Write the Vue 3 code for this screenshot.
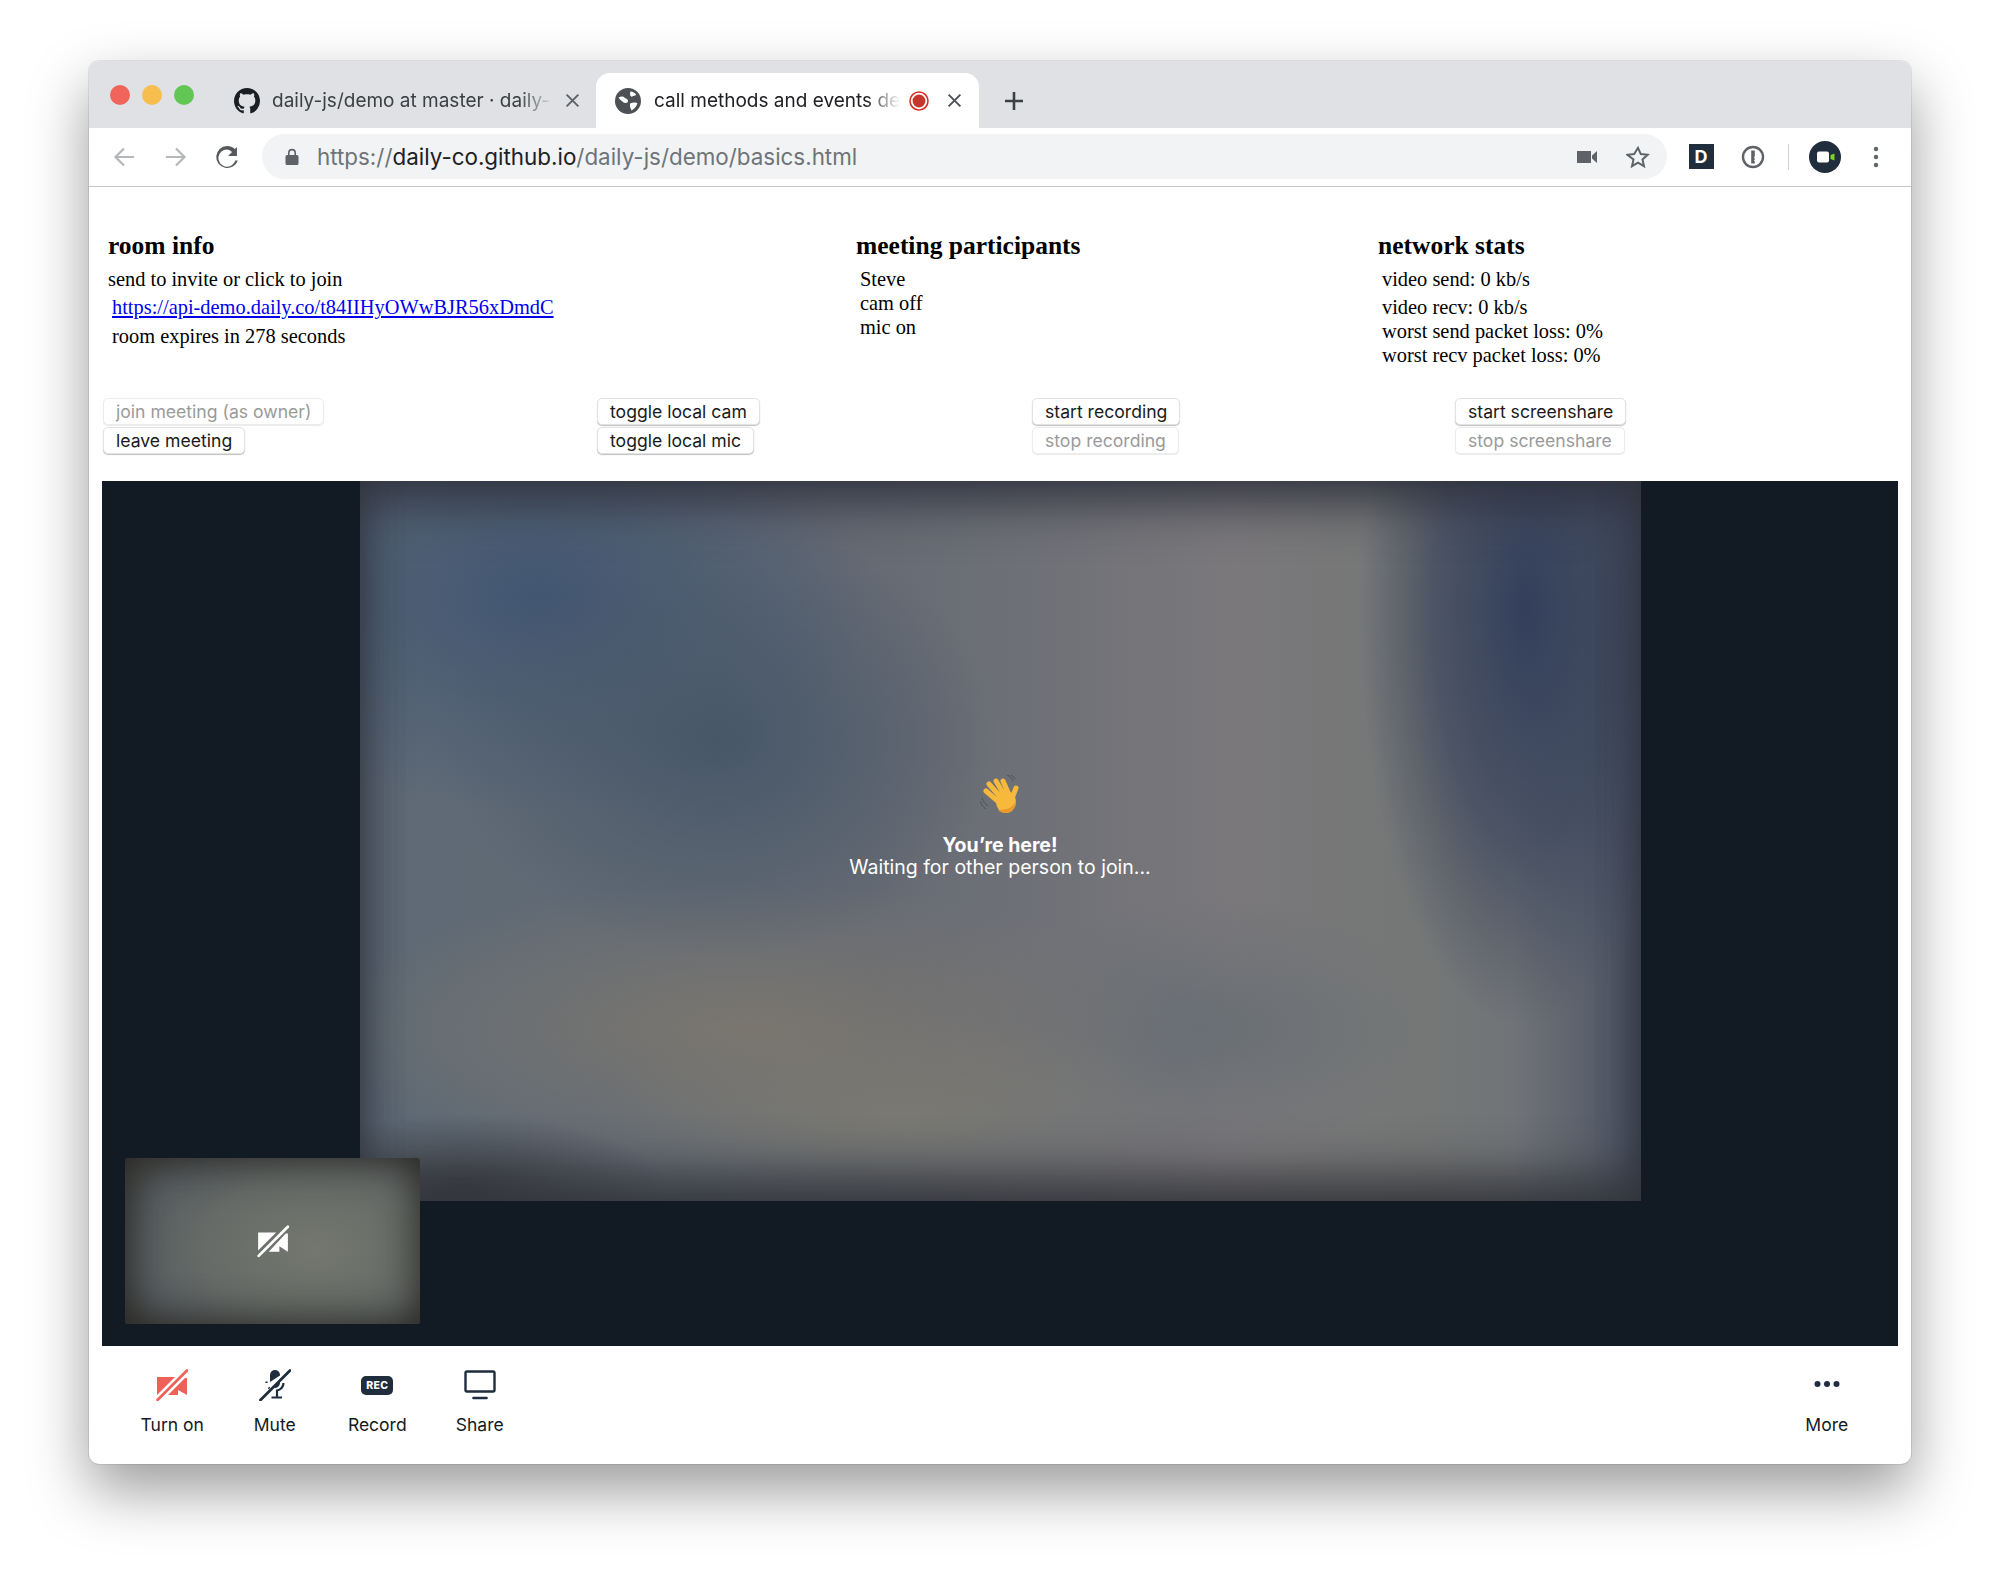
<script setup>
const leftTools = [
  { label: 'Turn on', icon: 'cam' },
  { label: 'Mute', icon: 'mic' },
  { label: 'Record', icon: 'rec' },
  { label: 'Share', icon: 'screen' }
]
</script>

<template>
  <div class="page">
    <div class="window">
      <div class="tabbar">
        <div class="lights">
          <span class="light red"></span>
          <span class="light yellow"></span>
          <span class="light green"></span>
        </div>
        <div class="tab">
          <svg class="favicon" viewBox="0 0 16 16"><path fill="#1b1f23" d="M8 0C3.58 0 0 3.58 0 8c0 3.54 2.29 6.53 5.47 7.59.4.07.55-.17.55-.38 0-.19-.01-.82-.01-1.49-2.01.37-2.53-.49-2.69-.94-.09-.23-.48-.94-.82-1.13-.28-.15-.68-.52-.01-.53.63-.01 1.08.58 1.23.82.72 1.21 1.87.87 2.33.66.07-.52.28-.87.51-1.07-1.78-.2-3.64-.89-3.64-3.95 0-.87.31-1.59.82-2.15-.08-.2-.36-1.02.08-2.12 0 0 .67-.21 2.2.82.64-.18 1.32-.27 2-.27.68 0 1.36.09 2 .27 1.53-1.04 2.2-.82 2.2-.82.44 1.1.16 1.92.08 2.12.51.56.82 1.27.82 2.15 0 3.07-1.87 3.75-3.65 3.95.29.25.54.73.54 1.48 0 1.07-.01 1.93-.01 2.2 0 .21.15.46.55.38A8.013 8.013 0 0016 8c0-4.42-3.58-8-8-8z"/></svg>
          <span class="tab-title first">daily-js/demo at master · daily-</span>
          <svg class="tab-x" viewBox="0 0 14 14"><path d="M1.500 1.500l11 11M12.500 1.500l-11 11" stroke="#5f6368" stroke-width="1.800" fill="none"/></svg>
        </div>
        <div class="tab active">
          <svg class="favicon" viewBox="0 0 22 22">
            <circle cx="11" cy="11" r="11" fill="#4d5156"/>
            <path fill="#fff" d="M3 8c2-1 4-1 5 0s3 1 3 3-3 2-4 1-3-2-4-4zM13 3c2 0 4 1 5 3l-3 1c-1 1-3 0-2-4zM13 13c2-1 5-1 6 0-1 3-3 5-5 6-1-2-2-4-1-6z"/>
          </svg>
          <span class="tab-title second">call methods and events de</span>
          <svg class="rec-dot" viewBox="0 0 20 20"><circle cx="10" cy="10" r="9" fill="#fff" stroke="#d93025" stroke-width="1.600"/><circle cx="10" cy="10" r="6.400" fill="#c5372c"/></svg>
          <svg class="tab-x" viewBox="0 0 14 14"><path d="M1.500 1.500l11 11M12.500 1.500l-11 11" stroke="#4d5156" stroke-width="1.800" fill="none"/></svg>
        </div>
        <svg class="plus" viewBox="0 0 20 20"><path d="M10 1v18M1 10h18" stroke="#3c4043" stroke-width="2.600" fill="none"/></svg>
      </div>

      <div class="toolbar">
        <svg class="nav back" viewBox="0 0 24 24"><path d="M22 12H4M12 3.500L3.500 12l8.500 8.500" stroke="#b5b7ba" stroke-width="2.200" fill="none"/></svg>
        <svg class="nav forward" viewBox="0 0 24 24"><path d="M2 12h18M12 3.500l8.500 8.500-8.500 8.500" stroke="#b5b7ba" stroke-width="2.200" fill="none"/></svg>
        <svg class="nav reload" viewBox="0 0 24 24"><path fill="#55585c" d="M20.500 3.500v7.600h-7.600l3.400-3.400A7.400 7.400 0 0 0 12 5.600 7.400 7.400 0 1 0 19.100 15h2.200A9.500 9.500 0 1 1 12 2.500c2.600 0 5 1 6.800 2.700z"/></svg>
        <div class="omnibox">
          <svg class="lock" viewBox="0 0 14 18"><path fill="#5f6368" d="M2 7h10a1.500 1.500 0 0 1 1.500 1.500v7A1.500 1.500 0 0 1 12 17H2a1.500 1.500 0 0 1-1.500-1.500v-7A1.500 1.500 0 0 1 2 7z"/><path d="M3.800 7V4.800a3.200 3.200 0 0 1 6.400 0V7" stroke="#5f6368" stroke-width="1.600" fill="none"/></svg>
          <span class="url"><span class="dim">https://</span>daily-co.github.io<span class="dim">/daily-js/demo/basics.html</span></span>
          <svg class="omni-cam" viewBox="0 0 20 14"><path fill="#5f6368" d="M0 1h14v12H0zM15 5.500L20 1v12l-5-4.500z"/></svg>
          <svg class="omni-star" viewBox="0 0 24 24"><path d="M12 2.800l2.800 6.300 6.900.7-5.200 4.600 1.500 6.800-6-3.500-6 3.500 1.500-6.800L1.300 9.800l6.900-.7z" fill="none" stroke="#5f6368" stroke-width="2"/></svg>
        </div>
        <div class="ext-d">D</div>
        <svg class="ext-key" viewBox="0 0 24 24"><circle cx="12" cy="12" r="10" fill="none" stroke="#5f6368" stroke-width="2.400"/><path d="M10.200 5.500h3.600v6l-1 1 1 1v1l-1 .8 1 .9v2.300h-3.600z" fill="#5f6368"/></svg>
        <span class="ext-divider"></span>
        <svg class="ext-avatar" viewBox="0 0 32 32"><circle cx="16" cy="16" r="16" fill="#1f2d3d"/><rect x="8" y="10.500" width="12" height="11" rx="2" fill="#fff"/><path d="M21.500 14l4-1.500v7l-4-1.500z" fill="#7ed321"/></svg>
        <svg class="ext-menu" viewBox="0 0 6 24"><circle cx="3" cy="4" r="2.200" fill="#5f6368"/><circle cx="3" cy="12" r="2.200" fill="#5f6368"/><circle cx="3" cy="20" r="2.200" fill="#5f6368"/></svg>
      </div>

      <div class="info-row">
        <div>
          <h2>room info</h2>
          <div class="line">send to invite or click to join</div>
          <div class="line gap indent"><a href="#">https://api-demo.daily.co/t84IIHyOWwBJR56xDmdC</a></div>
          <div class="line gap-more indent">room expires in 278 seconds</div>
        </div>
        <div>
          <h2>meeting participants</h2>
          <div class="indent">
            <div class="line">Steve</div>
            <div class="line">cam off</div>
            <div class="line">mic on</div>
          </div>
        </div>
        <div>
          <h2>network stats</h2>
          <div class="indent">
            <div class="line">video send: 0 kb/s</div>
            <div class="line gap">video recv: 0 kb/s</div>
            <div class="line">worst send packet loss: 0%</div>
            <div class="line">worst recv packet loss: 0%</div>
          </div>
        </div>
      </div>

      <div class="button-row">
        <div class="button-col">
          <button disabled>join meeting (as owner)</button>
          <button>leave meeting</button>
        </div>
        <div class="button-col">
          <button>toggle local cam</button>
          <button>toggle local mic</button>
        </div>
        <div class="button-col">
          <button>start recording</button>
          <button disabled>stop recording</button>
        </div>
        <div class="button-col">
          <button>start screenshare</button>
          <button disabled>stop screenshare</button>
        </div>
      </div>

      <div class="stage">
        <div class="remote-video"></div>
        <div class="message">
          <svg class="wave" viewBox="0 0 40 42">
            <path d="M2 23c1 3 3 6 6 8M0 26c1 3 3 6 6 8M27 0c3 1 5 3 6 6M31 0c2 1 3 2 4 4" stroke="#4e5257" stroke-width="1" fill="none"/>
            <g stroke="#f6b93b" stroke-width="5" stroke-linecap="round">
              <path d="M20 28L6 16M23 25L9 9M26 23L16 6M30 22L23 6M31 26L36 13"/>
            </g>
            <ellipse cx="26" cy="27" rx="10" ry="11" fill="#f6b93b"/>
            <path d="M18 35c4 4 12 4 15-1 2-3 3-6 3-9-2 6-6 10-18 10z" fill="#e9992c"/>
          </svg>
          <div class="here">You’re here!</div>
          <div>Waiting for other person to join...</div>
        </div>
        <div class="local-video">
          <svg class="pip-cam" viewBox="0 0 32 32"><path fill="#fff" d="M2 8h17L2 25zM12 26h10v-5l8 5V9h-2z"/><path d="M2.500 30L30 2.500" stroke="#fff" stroke-width="2.600" stroke-linecap="round"/></svg>
        </div>
      </div>

      <div class="tray">
        <div class="tool" v-for="tool in leftTools" :key="tool.label">
          <svg v-if="tool.icon === 'cam'" class="tool-icon" viewBox="0 0 32 32"><path fill="#ed6158" d="M1 8h18L1 26zM12 26h10v-5l9 5V9h-2z"/><path d="M1.500 31L31 1.500" stroke="#ed6158" stroke-width="2.600" stroke-linecap="round"/></svg>
          <svg v-else-if="tool.icon === 'mic'" class="tool-icon" viewBox="0 0 32 32">
            <path fill="#1f2d3d" d="M11 13V6a5 5 0 0 1 10 0v.500z"/>
            <path fill="#1f2d3d" d="M21 11v3a5 5 0 0 1-6.500 4.700z"/>
            <path d="M7.500 12.500v1.500M24.500 14c0 4-3 7-6.500 7.500v6M12.500 28.500h10.500M9.500 18.500l1 1" stroke="#1f2d3d" stroke-width="2.200" fill="none"/>
            <path d="M1.500 31L31 1.500" stroke="#1f2d3d" stroke-width="2.800" stroke-linecap="round"/>
          </svg>
          <span v-else-if="tool.icon === 'rec'" class="rec-badge">REC</span>
          <svg v-else class="tool-icon" viewBox="0 0 32 32"><rect x="1.500" y="2.500" width="29" height="20" rx="1.500" fill="none" stroke="#1f2d3d" stroke-width="2.400"/><path d="M9.500 29h13" stroke="#1f2d3d" stroke-width="2.600" stroke-linecap="round"/></svg>
          <span class="tool-label">{{ tool.label }}</span>
        </div>
        <div class="tool more">
          <svg class="tool-icon" viewBox="0 0 32 32"><circle cx="6.500" cy="15" r="3" fill="#1f2d3d"/><circle cx="16" cy="15" r="3" fill="#1f2d3d"/><circle cx="25.500" cy="15" r="3" fill="#1f2d3d"/></svg>
          <span class="tool-label">More</span>
        </div>
      </div>
    </div>
  </div>
</template>

<style>
html, body {
  margin: 0;
  background: #fff;
  overflow: hidden;
}
</style>

<style scoped>
.page {
  width: 2000px;
  height: 1583px;
  padding: 61px 0 0 89px;
  box-sizing: border-box;
}

.window {
  width: 1822px;
  height: 1403px;
  border-radius: 10px;
  background: #fff;
  box-shadow: 0 0 0 1px rgba(0, 0, 0, 0.08), 0 26px 60px rgba(0, 0, 0, 0.4);
  overflow: hidden;
  display: flex;
  flex-direction: column;
  font-family: Inter, "Noto Sans", sans-serif;
}

/* tab strip */
.tabbar {
  height: 67px;
  background: #dfe1e5;
  display: flex;
  align-items: flex-end;
  flex-shrink: 0;
}

.lights {
  width: 142px;
  align-self: flex-start;
  padding: 24px 0 0 21px;
  box-sizing: border-box;
  display: flex;
  gap: 12px;
}

.light {
  width: 20px;
  height: 20px;
  border-radius: 50%;
}
.light.red { background: #f0645c; }
.light.yellow { background: #f6bd4f; }
.light.green { background: #62c654; }

.tab {
  width: 365px;
  height: 55px;
  display: flex;
  align-items: center;
  padding-left: 3px;
  box-sizing: border-box;
  font-size: 19px;
  color: #3c4043;
}

.tab.active {
  width: 383px;
  background: #fff;
  border-radius: 14px 14px 0 0;
  padding-left: 19px;
  color: #202124;
}

.favicon {
  width: 26px;
  height: 26px;
  flex-shrink: 0;
}

.tab-title {
  margin-left: 12px;
  white-space: nowrap;
}
.tab-title.first {
  width: 281px;
  -webkit-mask-image: linear-gradient(to right, #000 88%, transparent);
  mask-image: linear-gradient(to right, #000 88%, transparent);
}
.tab-title.second {
  width: 246px;
  margin-left: 13px;
  -webkit-mask-image: linear-gradient(to right, #000 86%, transparent);
  mask-image: linear-gradient(to right, #000 86%, transparent);
}

.tab-x {
  width: 15px;
  height: 15px;
  margin-left: 12px;
  flex-shrink: 0;
}
.tab.active .tab-x { margin-left: 18px; }

.rec-dot {
  width: 20px;
  height: 20px;
  margin-left: 9px;
  flex-shrink: 0;
}

.plus {
  width: 20px;
  height: 20px;
  margin: 0 0 17px 25px;
}

/* address bar */
.toolbar {
  height: 59px;
  border-bottom: 1px solid #c4c6c8;
  box-sizing: border-box;
  display: flex;
  align-items: center;
  flex-shrink: 0;
  padding-bottom: 1px;
}

.nav {
  width: 24px;
  height: 24px;
  flex-shrink: 0;
}
.back { margin-left: 23px; }
.forward { margin-left: 28px; }
.reload {
  width: 28px;
  height: 28px;
  margin-left: 25px;
}

.omnibox {
  width: 1405px;
  height: 45px;
  margin-left: 20.500px;
  border-radius: 23px;
  background: #f1f3f4;
  display: flex;
  align-items: center;
  flex-shrink: 0;
}

.lock {
  width: 14px;
  height: 18px;
  margin-left: 23.500px;
}

.url {
  margin-left: 18px;
  font-size: 22.400px;
  color: #202124;
  white-space: nowrap;
}
.url .dim { color: #6f7378; }

.omni-cam {
  width: 20px;
  height: 14px;
  margin-left: auto;
}

.omni-star {
  width: 24px;
  height: 24px;
  margin: 0 17px 0 29px;
}

.ext-d {
  width: 25px;
  height: 25px;
  margin-left: 22px;
  background: #1f2d3d;
  color: #fff;
  font-weight: 700;
  font-size: 18px;
  line-height: 25px;
  text-align: center;
  flex-shrink: 0;
}

.ext-key {
  width: 24px;
  height: 24px;
  margin-left: 27px;
  flex-shrink: 0;
}

.ext-divider {
  width: 1px;
  height: 26px;
  background: #cfd1d3;
  margin-left: 23px;
  flex-shrink: 0;
}

.ext-avatar {
  width: 32px;
  height: 32px;
  margin-left: 20px;
  flex-shrink: 0;
}

.ext-menu {
  width: 6px;
  height: 24px;
  margin-left: 32px;
  flex-shrink: 0;
}

/* page content */
.info-row {
  height: 211px;
  box-sizing: border-box;
  padding: 46px 0 0 19px;
  display: grid;
  grid-template-columns: 748px 522px 1fr;
  font-family: "Liberation Serif", "Times New Roman", serif;
  font-size: 20.400px;
  color: #000;
  flex-shrink: 0;
}

h2 {
  margin: 0 0 8px;
  font-size: 25.500px;
  line-height: 26px;
  font-weight: 700;
}

.line {
  line-height: 24px;
  white-space: nowrap;
}
.line.gap { margin-top: 4px; }
.line.gap-more { margin-top: 5px; }
.indent { padding-left: 4px; }

a { color: #0000ee; }

.button-row {
  display: grid;
  grid-template-columns: 494px 435px 423px 1fr;
  padding-left: 14px;
  flex-shrink: 0;
}

.button-col {
  display: flex;
  flex-direction: column;
  align-items: flex-start;
  gap: 2px;
}

button {
  height: 27px;
  padding: 0 12px;
  background: #fff;
  border: 1px solid #e2e2e2;
  border-radius: 5px;
  box-shadow: 0 1px 1px rgba(0, 0, 0, 0.25);
  font-family: Inter, "Noto Sans", sans-serif;
  font-size: 17.600px;
  color: #1a1a1a;
  white-space: nowrap;
}

button:disabled {
  color: #9a9a9a;
  border-color: #ececec;
  box-shadow: 0 1px 1px rgba(0, 0, 0, 0.08);
}

.stage {
  position: relative;
  width: 1796px;
  height: 865px;
  margin: 27px 0 0 13px;
  background: #121a24;
  display: flex;
  justify-content: center;
  align-items: flex-start;
  flex-shrink: 0;
}

.remote-video {
  width: 1281px;
  height: 720px;
  background:
    radial-gradient(ellipse 16% 10% at 8% 98%, rgba(50, 50, 54, 0.7), rgba(50, 50, 54, 0)),
    radial-gradient(ellipse 13% 58% at 91% 18%, rgba(48, 60, 90, 0.95), rgba(50, 62, 88, 0.6) 55%, rgba(56, 66, 88, 0)),
    linear-gradient(to left, rgba(50, 62, 84, 0.55), rgba(50, 62, 84, 0) 10%),
    radial-gradient(ellipse 22% 30% at 28% 36%, rgba(70, 86, 104, 0.95), rgba(70, 86, 104, 0)),
    radial-gradient(ellipse 26% 30% at 14% 16%, rgba(62, 84, 114, 0.9), rgba(62, 84, 114, 0)),
    radial-gradient(ellipse 34% 20% at 30% 76%, rgba(126, 120, 110, 0.85), rgba(126, 120, 110, 0)),
    radial-gradient(ellipse 24% 14% at 42% 88%, rgba(124, 124, 116, 0.85), rgba(124, 124, 116, 0)),
    radial-gradient(ellipse 18% 18% at 66% 76%, rgba(100, 108, 114, 0.75), rgba(100, 108, 114, 0)),
    linear-gradient(to right, #5e6a76, #666b74 40%, #7a787b 68%, #757776 82%, #6c7078);
  box-shadow:
    inset 0 -40px 50px -14px rgba(50, 52, 56, 0.85),
    inset 0 36px 50px -14px rgba(48, 50, 62, 0.85),
    inset 20px 0 44px -16px rgba(40, 50, 64, 0.5),
    inset -20px 0 44px -16px rgba(38, 44, 60, 0.5);
}

.message {
  position: absolute;
  left: 0;
  right: 0;
  top: 294px;
  display: flex;
  flex-direction: column;
  align-items: center;
  color: #fff;
  font-size: 19.500px;
  line-height: 22px;
}

.wave {
  width: 40px;
  height: 42px;
  margin-bottom: 17px;
}

.here { font-weight: 700; }

.local-video {
  position: absolute;
  left: 23px;
  top: 677px;
  width: 295px;
  height: 166px;
  border-radius: 3px;
  display: flex;
  align-items: center;
  justify-content: center;
  background: radial-gradient(ellipse 70% 80% at 65% 55%, #73776e, #666b68 55%, #585d60 85%, #4f5354);
  box-shadow: inset 0 0 40px 2px rgba(32, 30, 26, 0.9);
}

.pip-cam {
  width: 34px;
  height: 34px;
}

.tray {
  flex: 1;
  display: flex;
  padding: 1px 0 0 32px;
}

.tool {
  width: 102.500px;
  padding-top: 22px;
  display: flex;
  flex-direction: column;
  align-items: center;
  box-sizing: border-box;
  color: #121a24;
}

.tool.more { margin-left: auto; margin-right: 33px; }

.tool-icon {
  width: 32px;
  height: 32px;
}

.rec-badge {
  width: 32px;
  height: 19px;
  margin: 6.500px 0;
  border-radius: 5px;
  background: #1f2d3d;
  color: #fff;
  font-size: 10.500px;
  font-weight: 800;
  line-height: 19px;
  text-align: center;
  letter-spacing: 0.3px;
}

.tool-label {
  margin-top: 13px;
  font-size: 17.500px;
  line-height: 22px;
}
</style>
